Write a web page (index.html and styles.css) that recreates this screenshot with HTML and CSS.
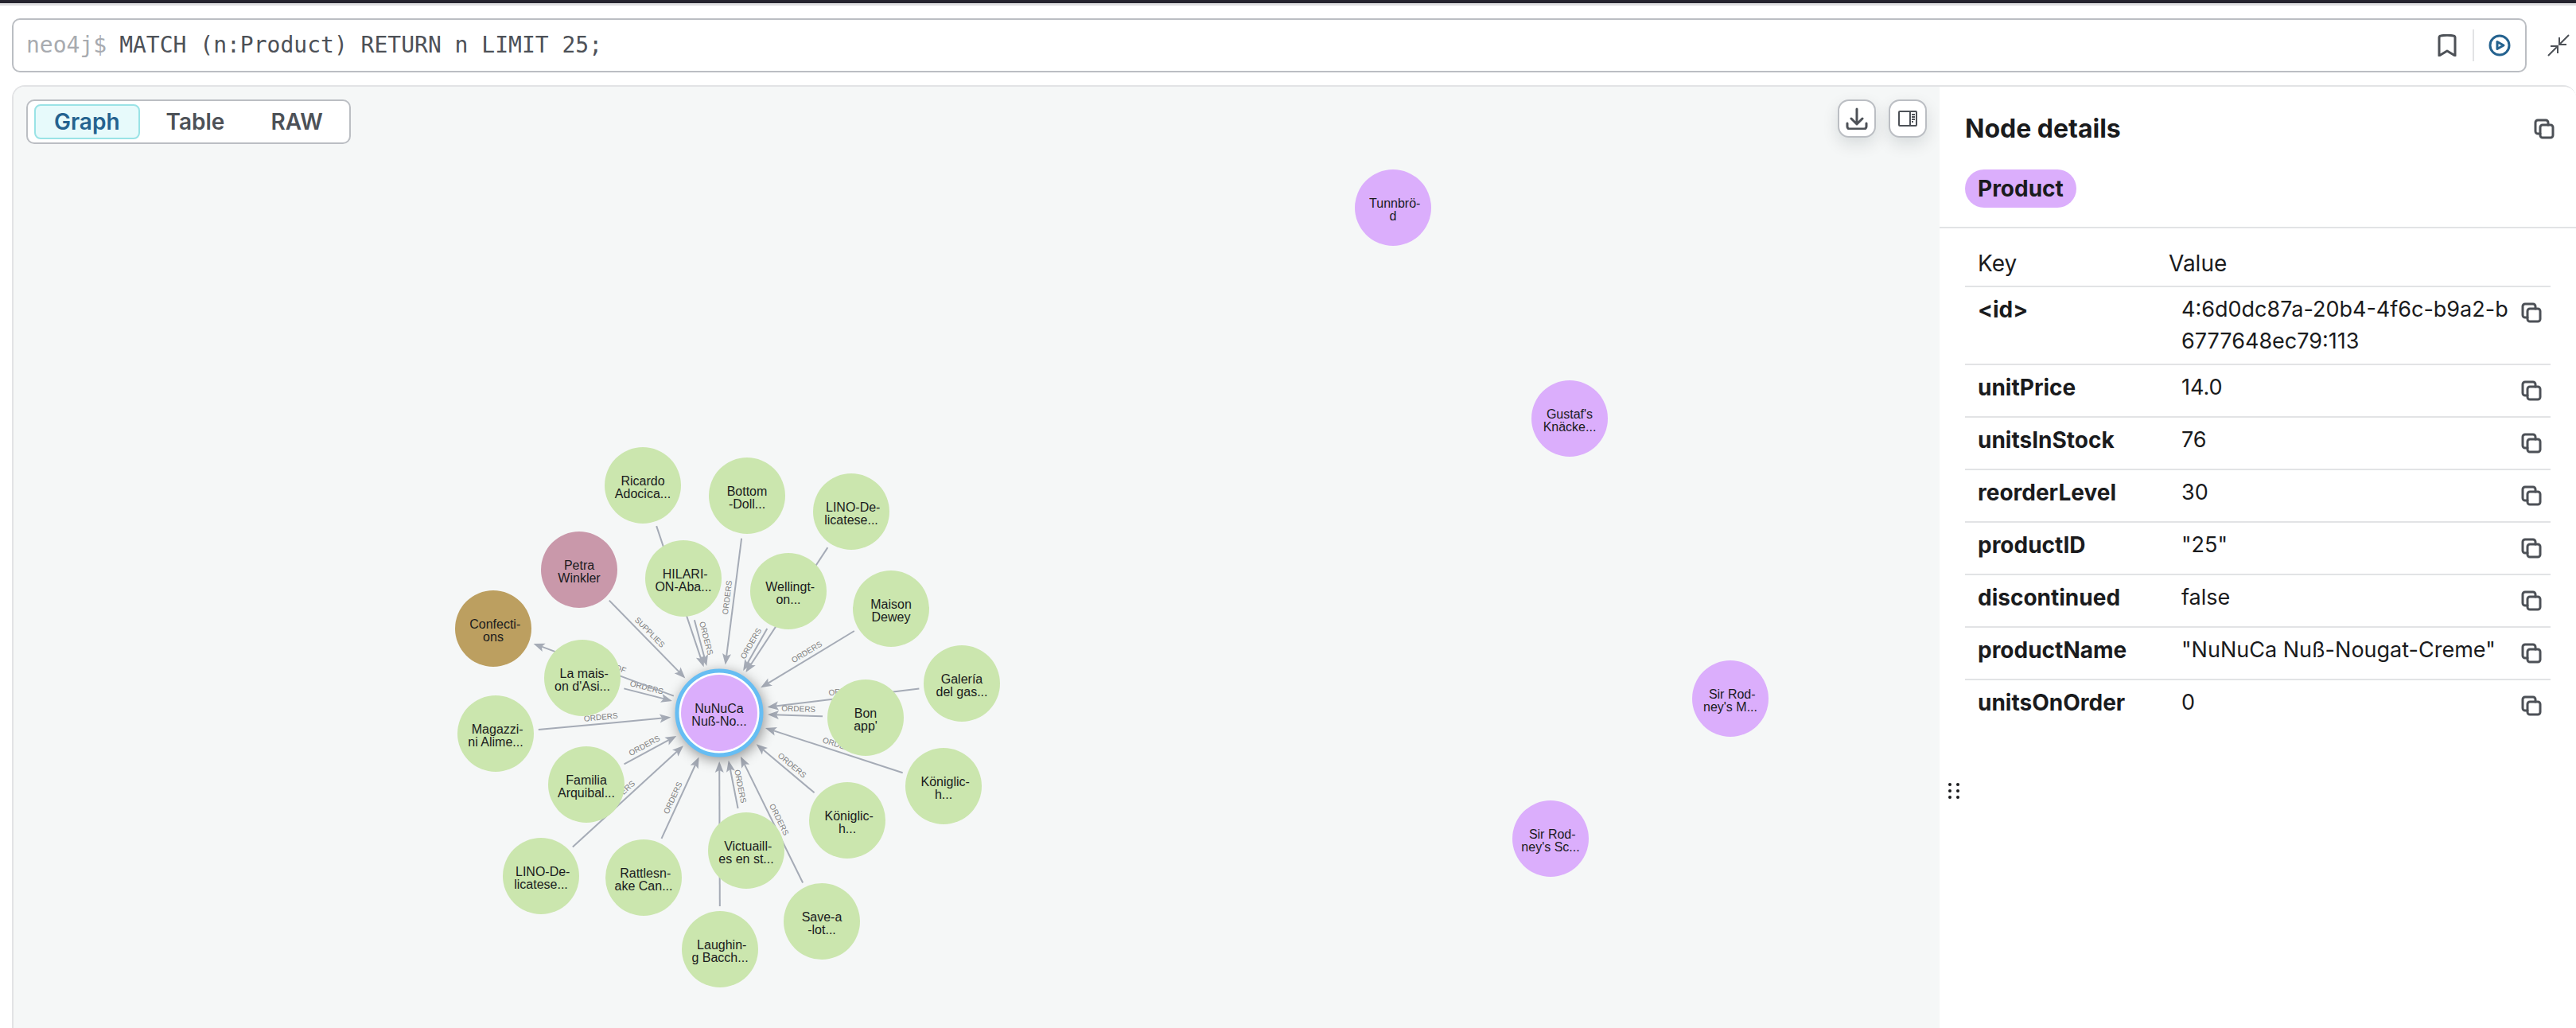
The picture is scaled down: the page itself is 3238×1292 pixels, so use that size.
FILE: index.html
```html
<!DOCTYPE html>
<html lang="en">
<head>
  <meta charset="UTF-8">
  <title>Neo4j Browser</title>
  <link rel="stylesheet" href="styles.css">
</head>
<body>
  <!-- shared icons -->
  <svg class="sprite" aria-hidden="true">
    <symbol id="icon-copy" viewBox="0 0 26 26">
      <rect x="8" y="8" width="16" height="16" rx="3"/>
      <path d="M18 8V5a3 3 0 0 0-3-3H5a3 3 0 0 0-3 3v11a3 3 0 0 0 3 3h3"/>
    </symbol>
  </svg>

  <div class="topbar"></div>

  <!-- query editor -->
  <form class="query">
    <div class="editor">
      <label for="cypher">neo4j$</label>
      <input id="cypher" type="text" value="MATCH (n:Product) RETURN n LIMIT 25;" spellcheck="false">
      <button type="button" class="icon-btn" aria-label="Save as favorite">
        <svg class="icon" width="28" height="28" viewBox="0 0 28 28"><path d="M4 27V4c0-1 1-2 2-2 5-1 11-1 16 0 1 0 2 1 2 2v23l-10-6z"/></svg>
      </button>
      <span class="sep"></span>
      <button type="submit" class="icon-btn run" aria-label="Run query">
        <svg class="icon" width="28" height="28" viewBox="0 0 28 28"><circle cx="14" cy="14" r="12"/><path d="M11 9.500v9l8-4.500z"/></svg>
      </button>
    </div>
    <button type="button" class="icon-btn collapse" aria-label="Collapse">
      <svg class="icon" width="28" height="28" viewBox="0 0 28 28"><path d="M27 1 15 13M15 4v9h9M1 27l12-12M4 15h9v9"/></svg>
    </button>
  </form>

  <!-- result frame -->
  <main class="result">
    <section class="canvas">
      <svg id="graph" viewBox="17 109 2421 1183" preserveAspectRatio="xMidYMin meet"></svg>
      <div class="toolbar">
        <div class="tabs">
          <button type="button" class="active">Graph</button>
          <button type="button">Table</button>
          <button type="button">RAW</button>
        </div>
        <div class="tools">
          <button type="button" aria-label="Download">
            <svg class="icon" width="28" height="28" viewBox="0 0 28 28"><path d="M14 2v18M7 14l7 7 7-7M2 20v4a3 3 0 0 0 3 3h18a3 3 0 0 0 3-3v-4"/></svg>
          </button>
          <button type="button" aria-label="Toggle details">
            <svg class="icon" width="28" height="28" viewBox="0 0 28 28"><path class="thin" d="M4 5h20a1 1 0 0 1 1 1v16a1 1 0 0 1-1 1H4a1 1 0 0 1-1-1V6a1 1 0 0 1 1-1zM17 5v18M19 9h4M19 12h4M19 15h4M19 18h2"/></svg>
          </button>
        </div>
      </div>
    </section>

    <aside class="details">
      <div class="handle"><i></i><i></i><i></i><i></i><i></i><i></i></div>
      <header>
        <div class="title">
          <h2>Node details</h2>
          <button type="button" class="copy" aria-label="Copy all"><svg class="icon" width="26" height="26"><use href="#icon-copy"/></svg></button>
        </div>
        <span class="chip">Product</span>
      </header>
      <table>
        <colgroup>
          <col class="col-key">
          <col>
          <col class="col-action">
        </colgroup>
        <thead>
          <tr><th scope="col">Key</th><th scope="col" colspan="2" class="value-head">Value</th></tr>
        </thead>
        <tbody>
          <tr>
            <th scope="row">&lt;id&gt;</th>
            <td>4:6d0dc87a-20b4-4f6c-b9a2-b6777648ec79:113</td>
            <td class="action"><button type="button" class="copy" aria-label="Copy id"><svg class="icon" width="26" height="26"><use href="#icon-copy"/></svg></button></td>
          </tr>
          <tr>
            <th scope="row">unitPrice</th>
            <td>14.0</td>
            <td class="action"><button type="button" class="copy" aria-label="Copy unitPrice"><svg class="icon" width="26" height="26"><use href="#icon-copy"/></svg></button></td>
          </tr>
          <tr>
            <th scope="row">unitsInStock</th>
            <td>76</td>
            <td class="action"><button type="button" class="copy" aria-label="Copy unitsInStock"><svg class="icon" width="26" height="26"><use href="#icon-copy"/></svg></button></td>
          </tr>
          <tr>
            <th scope="row">reorderLevel</th>
            <td>30</td>
            <td class="action"><button type="button" class="copy" aria-label="Copy reorderLevel"><svg class="icon" width="26" height="26"><use href="#icon-copy"/></svg></button></td>
          </tr>
          <tr>
            <th scope="row">productID</th>
            <td>"25"</td>
            <td class="action"><button type="button" class="copy" aria-label="Copy productID"><svg class="icon" width="26" height="26"><use href="#icon-copy"/></svg></button></td>
          </tr>
          <tr>
            <th scope="row">discontinued</th>
            <td>false</td>
            <td class="action"><button type="button" class="copy" aria-label="Copy discontinued"><svg class="icon" width="26" height="26"><use href="#icon-copy"/></svg></button></td>
          </tr>
          <tr>
            <th scope="row">productName</th>
            <td>"NuNuCa Nuß-Nougat-Creme"</td>
            <td class="action"><button type="button" class="copy" aria-label="Copy productName"><svg class="icon" width="26" height="26"><use href="#icon-copy"/></svg></button></td>
          </tr>
          <tr>
            <th scope="row">unitsOnOrder</th>
            <td>0</td>
            <td class="action"><button type="button" class="copy" aria-label="Copy unitsOnOrder"><svg class="icon" width="26" height="26"><use href="#icon-copy"/></svg></button></td>
          </tr>
        </tbody>
      </table>
    </aside>
  </main>

  <script src="graph.js"></script>
</body>
</html>
```
FILE: styles.css
```css
* { box-sizing: border-box; }
body {
  margin: 0;
  height: 100vh;
  display: flex;
  flex-direction: column;
  background: #fff;
  color: #1a1b1d;
  font-family: Inter, "Open Sans", sans-serif;
  font-size: 28px;
  line-height: 40px;
  overflow: hidden;
}
button { font: inherit; color: inherit; background: none; border: 0; padding: 0; cursor: pointer; }
.sprite { display: none; }
.icon {
  display: block;
  fill: none;
  stroke: #4d5157;
  stroke-width: 3;
  stroke-linejoin: round;
  stroke-linecap: round;
}
.icon .thin { stroke-width: 2; stroke-linecap: butt; }

.topbar {
  flex: none;
  height: 7px;
  background: #25242e;
  border-bottom: 3px solid #dedee0;
}

/* query editor */
.query { flex: none; display: flex; align-items: center; padding: 16px 8px 16px 15px; gap: 26px; }
.editor {
  flex: 1;
  display: flex;
  align-items: center;
  height: 68px;
  padding: 0 18px 0 16px;
  border: 2px solid #bbbec3;
  border-radius: 10px;
  font-family: "DejaVu Sans Mono", monospace;
}
.editor label { color: #a8abb0; margin-right: 16px; }
.editor input {
  flex: 1;
  min-width: 0;
  border: 0;
  padding: 0;
  outline: 0;
  font: inherit;
  color: #4d5157;
}
.sep { width: 2px; height: 40px; margin: 0 18px; background: #e2e3e5; }
.run .icon { stroke: #24628f; }
.collapse .icon { stroke-width: 2; stroke-linecap: butt; stroke-linejoin: miter; }

/* result frame */
.result {
  flex: 1;
  min-height: 0;
  display: flex;
  margin-left: 15px;
  border: 2px solid #e2e3e5;
  border-width: 2px 0 0 2px;
  border-radius: 16px 16px 0 0;
  overflow: hidden;
}
.canvas { flex: 1; min-width: 0; position: relative; background: #f5f7f7; }
#graph { position: absolute; inset: 0; width: 100%; height: 100%; }
.toolbar {
  position: relative;
  display: flex;
  justify-content: space-between;
  align-items: flex-start;
  padding: 16px;
}
.tabs {
  display: flex;
  gap: 8px;
  padding: 4px 8px;
  background: #fff;
  border: 2px solid #bbbec3;
  border-radius: 10px;
}
.tabs button {
  padding: 0 23px;
  border: 2px solid transparent;
  border-radius: 8px;
  color: #4d5157;
  font-weight: 600;
}
.tabs .active { color: #24628f; background: #e7fafb; border-color: #9ae3e6; }
.tools { display: flex; gap: 16px; }
.tools button {
  display: grid;
  place-items: center;
  width: 48px;
  height: 48px;
  background: #fff;
  border: 2px solid #bbbec3;
  border-radius: 14px;
  box-shadow: 0 8px 20px rgba(12, 26, 37, 0.12);
}

/* graph */
.edge line { stroke: #a5abb6; stroke-width: 2; }
.edge path { fill: #a5abb6; }
.edge text { font: 10px "Liberation Sans", Arial, sans-serif; fill: #808080; text-anchor: middle; }
.node text { font: 16px "Liberation Sans", Arial, sans-serif; fill: #1a1b1d; text-anchor: middle; }
.customer circle { fill: #cbe6ae; }
.product circle { fill: #dbaefc; }
.supplier circle { fill: #c998aa; }
.category circle { fill: #bc9f60; }
.node .ring { fill: #fff; stroke: #66bdf3; stroke-width: 5; filter: drop-shadow(2px 4px 8px rgba(0, 0, 0, 0.4)); }

/* details sidebar */
.details { flex: none; width: 800px; position: relative; background: #fff; }
.handle {
  position: absolute;
  left: 11px;
  top: 74%;
  display: grid;
  grid-template-columns: 4px 4px;
  gap: 4px 6px;
}
.handle i { width: 4px; height: 4px; border-radius: 50%; background: #1a1b1d; }
.details header { padding: 29px 16px 24px 32px; border-bottom: 2px solid #e2e3e5; }
.title { display: flex; align-items: center; justify-content: space-between; margin-bottom: 27px; }
.title h2 { margin: 0; font-size: 32px; line-height: 48px; font-weight: 700; }
.copy { display: grid; place-items: center; width: 48px; height: 48px; }
.chip {
  display: block;
  width: fit-content;
  padding: 4px 16px;
  border-radius: 24px;
  background: #dbaefc;
  font-weight: 700;
}
table { width: 736px; margin: 16px 32px; border-collapse: collapse; table-layout: fixed; }
.col-key { width: 256px; }
.col-action { width: 48px; }
tr { border-bottom: 2px solid #e2e3e5; }
tbody tr:last-child { border-bottom: 0; }
th, td { padding: 8px 0 8px 16px; text-align: left; vertical-align: top; }
thead th { font-weight: 400; }
.value-head { padding-left: 0; }
tbody th { font-weight: 700; }
td { font-size: 27px; word-break: break-all; }
.action { padding-left: 0; }
```
FILE: graph.js
```js
// nodes: [id, type, x, y, caption lines]
const nodes = [
  ['tunnbrod', 'product', 1751, 261, ['\u00a0Tunnbrö-', 'd']],
  ['gustaf', 'product', 1973, 526, ["Gustaf's", 'Knäcke...']],
  ['marmalade', 'product', 2175, 878, ['\u00a0Sir Rod-', "ney's M..."]],
  ['scones', 'product', 1949, 1054, ['\u00a0Sir Rod-', "ney's Sc..."]],
  ['ricardo', 'customer', 808, 610, ['Ricardo', 'Adocica...']],
  ['bottom', 'customer', 939, 623, ['Bottom', '-Doll...']],
  ['lino1', 'customer', 1070, 643, ['\u00a0LINO-De-', 'licatese...']],
  ['petra', 'supplier', 728, 716, ['Petra', 'Winkler']],
  ['hilarion', 'customer', 859, 727, ['\u00a0HILARI-', 'ON-Aba...']],
  ['wellington', 'customer', 991, 743, ['\u00a0Wellingt-', 'on...']],
  ['maison', 'customer', 1120, 765, ['Maison', 'Dewey']],
  ['confections', 'category', 620, 790, ['\u00a0Confecti-', 'ons']],
  ['asie', 'customer', 732, 852, ['\u00a0La mais-', "on d'Asi..."]],
  ['galeria', 'customer', 1209, 859, ['Galería', 'del gas...']],
  ['bonapp', 'customer', 1088, 902, ['Bon', "app'"]],
  ['magazzini', 'customer', 623, 922, ['\u00a0Magazzi-', 'ni Alime...']],
  ['familia', 'customer', 737, 986, ['Familia', 'Arquibal...']],
  ['koniglich1', 'customer', 1186, 988, ['\u00a0Königlic-', 'h...']],
  ['koniglich2', 'customer', 1065, 1031, ['\u00a0Königlic-', 'h...']],
  ['victuailles', 'customer', 938, 1069, ['\u00a0Victuaill-', 'es en st...']],
  ['lino2', 'customer', 680, 1101, ['\u00a0LINO-De-', 'licatese...']],
  ['rattlesnake', 'customer', 809, 1103, ['\u00a0Rattlesn-', 'ake Can...']],
  ['save', 'customer', 1033, 1158, ['Save-a', '-lot...']],
  ['laughing', 'customer', 905, 1193, ['\u00a0Laughin-', 'g Bacch...']],
  ['nunuca', 'product', 904, 896, ['NuNuCa', 'Nuß-No...']],
];

const selected = 'nunuca';
const byId = {};
nodes.forEach(n => { byId[n[0]] = n; });

const edges = nodes
  .filter(n => n[1] === 'customer')
  .map(n => [n[0], selected, 'ORDERS']);
edges.push(['petra', selected, 'SUPPLIES']);
edges.push([selected, 'confections', 'PART_OF']);

const RADIUS = 48;
const HEAD = 8;
const gap = id => (id === selected ? 61 : 54);

function drawEdge([from, to, label]) {
  const [, , x1, y1] = byId[from];
  const [, , x2, y2] = byId[to];
  const length = Math.hypot(x2 - x1, y2 - y1);
  const angle = Math.atan2(y2 - y1, x2 - x1) * 180 / Math.PI;
  const start = gap(from);
  const end = length - gap(to);
  const mid = (start + end - HEAD) / 2;
  // keep the label readable; near-vertical edges read downwards
  const flip = x2 < x1 - 1 ? `rotate(180 ${mid} 0)` : '';
  const side = Math.abs(x2 - x1) <= 1 ? `rotate(180 ${mid} 0)` : flip;
  return `<g class="edge" transform="translate(${x1} ${y1}) rotate(${angle})">
    <line x1="${start}" x2="${end - HEAD}"/>
    <path d="M${end} 0l-14 5.500 3-5.500-3-5.500z"/>
    <g transform="${side}"><text x="${mid}" y="-5">${label}</text></g>
  </g>`;
}

function drawNode([id, type, x, y, lines]) {
  const ring = id === selected ? `<circle class="ring" cx="${x}" cy="${y}" r="${RADIUS + 5}"/>` : '';
  return `<g class="node ${type}">${ring}
    <circle cx="${x}" cy="${y}" r="${RADIUS}"/>
    <text x="${x}" y="${y}">${lines[0]}</text>
    <text x="${x}" y="${y + 16}">${lines[1]}</text>
  </g>`;
}

document.getElementById('graph').innerHTML =
  edges.map(drawEdge).join('') + nodes.map(drawNode).join('');
```
